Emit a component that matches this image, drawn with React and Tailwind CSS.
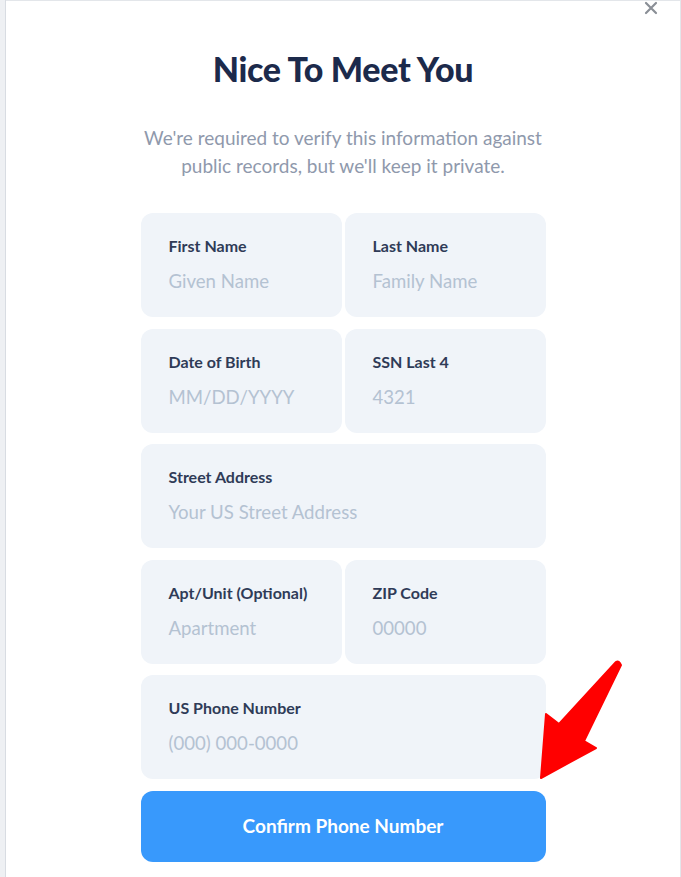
import React from 'react';

const font = { fontFamily: 'Lato, "Open Sans", sans-serif' };

function Field({ label, placeholder, className = '' }) {
  return (
    <div className={`h-[104px] rounded-xl bg-[#f0f4f9] pl-[28px] pt-[24px] ${className}`}>
      <div className="text-[16px] font-bold leading-[18px] text-[#2f3b57]">{label}</div>
      <div className="mt-[15px] text-[18.6px] leading-[22px] text-[#b4c2d2]">{placeholder}</div>
    </div>
  );
}

export default function App() {
  return (
    <div className="flex h-[877px] w-[681px] bg-[#eef0f3]" style={font}>
      {/* page behind the modal */}
      <div className="w-[6px] border-r border-[#d8dce2] bg-[#eef0f3]" />

      {/* Modal */}
      <div className="relative flex flex-1 flex-col items-center border-t border-r border-[#e3e6ea] bg-white">
        <button className="absolute right-[22px] top-[0px] text-[#8a8f96]">
          <svg width="14" height="14" viewBox="0 0 14 14" fill="none" stroke="currentColor" strokeWidth="2.2" strokeLinecap="round">
            <path d="M2 2l10 10M12 2L2 12" />
          </svg>
        </button>

        <h1 className="mt-[48px] text-[34px] font-black leading-[40px] tracking-[-0.3px] text-[#1c2a4b]">
          Nice To Meet You
        </h1>

        <p className="mt-[35px] text-center text-[19px] leading-[28px] text-[#8f99ac]">
          We're required to verify this information against
          <br />
          public records, but we'll keep it private.
        </p>

        <div className="mt-[33px] flex w-[405px] flex-col gap-[11.5px]">
          <div className="grid grid-cols-2 gap-[3px]">
            <Field label="First Name" placeholder="Given Name" />
            <Field label="Last Name" placeholder="Family Name" />
          </div>
          <div className="grid grid-cols-2 gap-[3px]">
            <Field label="Date of Birth" placeholder="MM/DD/YYYY" />
            <Field label="SSN Last 4" placeholder="4321" />
          </div>
          <Field label="Street Address" placeholder="Your US Street Address" />
          <div className="grid grid-cols-2 gap-[3px]">
            <Field label="Apt/Unit (Optional)" placeholder="Apartment" />
            <Field label="ZIP Code" placeholder="00000" />
          </div>
          <Field label="US Phone Number" placeholder="(000) 000-0000" />
          <button className="mt-[0.5px] h-[71px] rounded-xl bg-[#3899fc] text-[19px] font-bold text-white">
            Confirm Phone Number
          </button>
        </div>

        {/* annotation arrow */}
        <svg className="absolute left-[521px] top-[655px]" width="100" height="130" viewBox="528 655 100 130">
          <path
            d="M542 777 L547 713 L560 723 L617 661 Q620 659 622 664 L585 740 L597 747 Z"
            fill="#ff0000"
            stroke="#ff0000"
            strokeWidth="2"
            strokeLinejoin="round"
          />
        </svg>
      </div>
    </div>
  );
}
